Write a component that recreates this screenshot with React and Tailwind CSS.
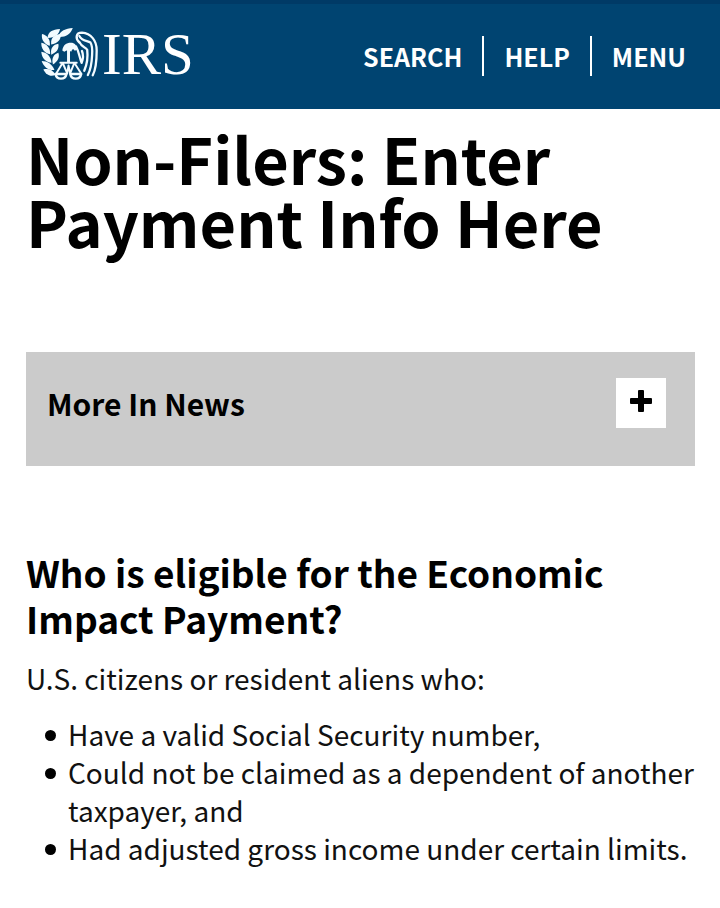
import React from 'react'

const navItems = ['SEARCH', 'HELP', 'MENU']

const requirements = [
  'Have a valid Social Security number,',
  'Could not be claimed as a dependent of another taxpayer, and',
  'Had adjusted gross income under certain limits.'
]

const EagleIcon = () => (
  <svg viewBox="33 24 174 158" className="h-[52px] w-[57px]" fill="#f2fbff" aria-hidden="true">
    {/* olive branch */}
    <path d="M53 54 C54 36 68 28 91 27 C88 44 76 54 53 54Z" />
    <path d="M85 51 C91 32 108 26 130 24 C123 44 106 53 85 51Z" />
    <path d="M64 70 C63 54 74 43 94 42 C94 60 84 71 64 74Z" />
    <path d="M36 42 C52 46 62 58 60 78 C44 74 33 60 36 42Z" />
    <path d="M34 69 C50 72 62 84 61 104 C44 101 33 88 34 69Z" />
    <path d="M34 96 C50 98 64 110 65 130 C48 128 35 116 34 96Z" />
    <path d="M35 124 C52 124 68 134 74 152 C56 154 41 142 35 124Z" />
    <path d="M40 150 C54 146 68 150 78 166 C62 174 48 166 40 150Z" />
    <path d="M64 101 C62 86 70 74 86 72 C89 88 80 99 64 105Z" />
    <path d="M69 132 C65 116 72 103 86 99 C91 113 84 126 69 135Z" />
    {/* head */}
    <path d="M98 92 C101 76 110 69 124 69 C136 69 142 76 143 90 L136 93 C131 86 128 88 126 95 L111 92 L104 96Z" />
    <g fill="none" stroke="#f2fbff" strokeLinecap="round" strokeLinejoin="round">
      {/* wing */}
      <path strokeWidth="7" d="M150 68 C138 56 138 38 158 38 C186 40 203 62 203 92 C203 122 202 146 191 168" />
      <path strokeWidth="7" d="M150 48 C158 64 174 62 184 68 C190 78 190 92 189 106 C188 130 185 150 176 167" />
      <path strokeWidth="7" d="M150 66 C158 84 168 80 174 90 C177 114 172 138 165 154" />
      <path strokeWidth="7" d="M140 80 C149 96 150 112 157 130 C161 120 163 106 158 94" />
      {/* scales */}
      <path strokeWidth="9" strokeLinecap="butt" d="M117 88V130" />
      <path strokeWidth="6" d="M92 130H142" />
      <path strokeWidth="6" d="M98 132L80 162M100 132L113 162L117 138L122 162L134 132M136 132L155 162" />
      <path strokeWidth="7" d="M77 164H111C109 174 102 178 94 178C86 178 79 174 77 164Z" />
      <path strokeWidth="7" d="M122 164H156C154 174 147 178 139 178C131 178 124 174 122 164Z" />
    </g>
  </svg>
)

const PlusIcon = () => (
  <svg viewBox="0 0 22 22" className="size-[22px]" aria-hidden="true">
    <rect x="0" y="8" width="22" height="6" rx="1" />
    <rect x="8" y="0" width="6" height="22" rx="1" />
  </svg>
)

const Header = () => (
  <header className="flex items-center justify-between border-t-4 border-[#003a66] bg-[#004471] pt-5 pr-[34px] pb-[25px] pl-[41px] text-white">
    <a href="#home" aria-label="IRS" className="flex items-center gap-1">
      <EagleIcon />
      <span className="font-['Liberation_Serif',serif] text-[59px] leading-[60px]">IRS</span>
    </a>
    <nav className="mt-1 flex items-center divide-x-2 divide-white text-[25px] leading-10 font-bold">
      {navItems.map((item) => (
        <a key={item} href={`#${item.toLowerCase()}`} className="px-5 last:pr-0">
          {item}
        </a>
      ))}
    </nav>
  </header>
)

const App = () => (
  <div className="min-h-screen bg-white font-['Noto_Sans_CJK_SC',sans-serif] text-black">
    <Header />
    <main className="pt-[17px] pr-[25px] pb-8 pl-[26px]">
      <h1 className="text-[63px] leading-[63px] font-bold">Non-Filers: Enter Payment Info Here</h1>
      <section className="mt-[100px] flex items-start justify-between bg-[#cbcbcb] pt-[26px] pr-[29px] pb-[38px] pl-[21px]">
        <h2 className="text-[30px] leading-[50px] font-bold">More In News</h2>
        <button
          type="button"
          aria-label="Expand More In News"
          className="flex size-[50px] items-center justify-center bg-white pb-1"
        >
          <PlusIcon />
        </button>
      </section>
      <h2 className="mt-[83px] text-[37px] leading-[46px] font-bold">
        Who is eligible for the Economic Impact Payment?
      </h2>
      <p className="mt-[18px] text-[28px] leading-[38px] text-[#111]">U.S. citizens or resident aliens who:</p>
      <ul className="mt-[18px] text-[28px] leading-[38px] text-[#111]">
        {requirements.map((text) => (
          <li key={text} className="flex gap-3 pl-[19px]">
            <span className="mt-[15px] size-[11px] shrink-0 rounded-full bg-black" />
            <span>{text}</span>
          </li>
        ))}
      </ul>
    </main>
  </div>
)

export default App
